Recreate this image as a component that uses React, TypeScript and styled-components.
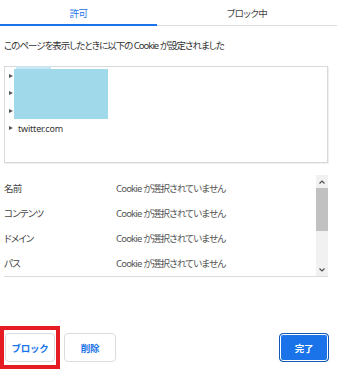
import React from 'react'
import styled, { createGlobalStyle } from 'styled-components'

const GlobalStyle = createGlobalStyle`
  html, body {
    margin: 0;
    padding: 0;
    background: #fff;
  }
  body {
    font-family: "Noto Sans", "Noto Sans CJK JP", sans-serif;
    font-feature-settings: "palt";
    color: #333;
  }
`

const Page = styled.div`
  width: 340px;
  height: 371px;
  display: flex;
  flex-direction: column;
  overflow: hidden;
`
const Tabs = styled.div`
  display: flex;
  height: 25px;
  border-bottom: 1px solid #dadce0;
  margin-right: 3px;
`
const Tab = styled.div<{ $active?: boolean; $width?: number }>`
  ${p => (p.$width ? `width: ${p.$width}px;` : 'flex: 1;')}
  display: flex;
  align-items: center;
  justify-content: center;
  font-size: 9.5px;
  letter-spacing: -0.5px;
  color: ${p => (p.$active ? '#1a73e8' : '#444')};
  box-shadow: ${p => (p.$active ? 'inset 0 -2px 0 #1a73e8' : 'none')};
  margin-bottom: -1px;
`
const Caption = styled.div`
  margin: 13px 0 0 4px;
  font-size: 9.5px;
  letter-spacing: -1px;
  line-height: 14px;
  color: #333;
`
const TreeBox = styled.div`
  position: relative;
  margin: 13px 12px 0 4px;
  height: 95px;
  border: 1px solid #d9d9d9;
  box-shadow: 1px 1px 0 #efefef;
`
const TreeRow = styled.div`
  height: 17.5px;
  display: flex;
  align-items: center;
  padding-left: 4px;
  font-size: 9px;
  letter-spacing: -0.2px;
  color: #333;
`
const Arrow = styled.span`
  width: 0;
  height: 0;
  border-top: 2.5px solid transparent;
  border-bottom: 2.5px solid transparent;
  border-left: 4px solid #555;
  margin-right: 5px;
`
const Redact = styled.div`
  position: absolute;
  left: 9px;
  top: 2px;
  width: 94px;
  height: 50px;
  background: #9fd9ea;
`
const RedactTop = styled.div`
  position: absolute;
  left: 11px;
  top: -1px;
  width: 35px;
  height: 3px;
  background: #c9e6f1;
`
const Details = styled.div`
  display: flex;
  margin: 12px 12px 0 4px;
  height: 101px;
  border-bottom: 1px solid #dadce0;
`
const DetailList = styled.div`
  flex: 1;
  padding-top: 0.5px;
`
const DetailRow = styled.div`
  height: 25px;
  display: flex;
  align-items: center;
  font-size: 9.5px;
  letter-spacing: -0.8px;
`
const Label = styled.span`
  width: 112px;
  color: #444;
`
const Value = styled.span`
  color: #555;
`
const Scrollbar = styled.div`
  width: 12px;
  background: #f1f1f1;
  display: flex;
  flex-direction: column;
`
const ScrollArrow = styled.div`
  height: 13px;
  display: flex;
  align-items: center;
  justify-content: center;
`
const Thumb = styled.div`
  height: 43px;
  background: #c1c1c1;
`
const Track = styled.div`
  flex: 1;
`
const Footer = styled.div`
  display: flex;
  align-items: center;
  margin-top: 49px;
  padding-right: 11px;
`
const Highlight = styled.div`
  border: 4px solid #e51c24;
  padding: 3px 1px;
  display: flex;
`
const Button = styled.button<{ $primary?: boolean; $width: number }>`
  width: ${p => p.$width}px;
  height: 29px;
  border-radius: 4px;
  font-family: "Noto Sans", "Noto Sans CJK JP", sans-serif;
  font-size: 9.5px;
  letter-spacing: -0.3px;
  font-weight: 600;
  padding: 0;
  cursor: pointer;
  border: 1px solid ${p => (p.$primary ? '#1557b0' : '#dadce0')};
  background: ${p => (p.$primary ? '#1a73e8' : '#fff')};
  color: ${p => (p.$primary ? '#fff' : '#1a73e8')};
  box-shadow: ${p => (p.$primary ? 'inset 0 0 0 1px #fff' : 'none')};
`
const DeleteButton = styled(Button)`
  margin-left: 4px;
`
const DoneButton = styled(Button)`
  margin-left: auto;
`

const Chevron = ({ up }: { up?: boolean }) => (
  <svg width="6" height="4" viewBox="0 0 6 4">
    <path d={up ? 'M0.5 3.5 L3 1 L5.5 3.5' : 'M0.5 0.5 L3 3 L5.5 0.5'} fill="none" stroke="#505050" strokeWidth="1.2" />
  </svg>
)

const details = ['名前', 'コンテンツ', 'ドメイン', 'パス']

const App = () => {
  return (
    <Page>
      <GlobalStyle />
      <Tabs>
        <Tab $active $width={157}>許可</Tab>
        <Tab>ブロック中</Tab>
      </Tabs>
      <Caption>このページを表示したときに以下の Cookie が設定されました</Caption>
      <TreeBox>
        <TreeRow><Arrow /></TreeRow>
        <TreeRow><Arrow /></TreeRow>
        <TreeRow><Arrow /></TreeRow>
        <TreeRow><Arrow />twitter.com</TreeRow>
        <RedactTop />
        <Redact />
      </TreeBox>
      <Details>
        <DetailList>
          {details.map(name => (
            <DetailRow key={name}>
              <Label>{name}</Label>
              <Value>Cookie が選択されていません</Value>
            </DetailRow>
          ))}
        </DetailList>
        <Scrollbar>
          <ScrollArrow><Chevron up /></ScrollArrow>
          <Thumb />
          <Track />
          <ScrollArrow><Chevron /></ScrollArrow>
        </Scrollbar>
      </Details>
      <Footer>
        <Highlight>
          <Button $width={50}>ブロック</Button>
        </Highlight>
        <DeleteButton $width={52}>削除</DeleteButton>
        <DoneButton $primary $width={50}>完了</DoneButton>
      </Footer>
    </Page>
  )
}

export default App
